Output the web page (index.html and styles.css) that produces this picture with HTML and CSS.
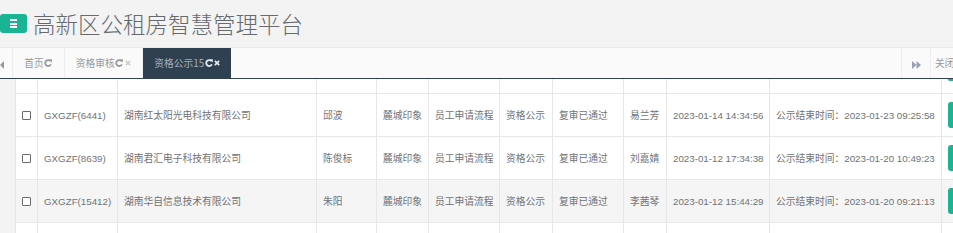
FILE: index.html
```html
<!DOCTYPE html>
<html lang="zh-CN">
<head>
<meta charset="utf-8">
<title>高新区公租房智慧管理平台</title>
<link rel="stylesheet" href="styles.css">
</head>
<body>
<header class="header">
  <a class="menu-btn" href="#" aria-label="菜单"><span></span><span></span><span></span></a>
  <h1 class="title">高新区公租房智慧管理平台</h1>
</header>
<div class="tabbar">
  <div class="roll-left"><svg width="4" height="8" viewBox="0 0 4 8"><polygon points="0,4 4,0 4,8" fill="#9a9a9a"/></svg></div>
  <nav class="page-tabs">
    <a class="tab" href="#">首页<svg class="ico-refresh" viewBox="0 0 8 8"><path d="M6.6 2.2A3 3 0 1 0 6.9 5.4" fill="none" stroke="currentColor" stroke-width="1.8"/><polygon points="4.6,0.2 7.9,0.2 7.9,3.5" fill="currentColor"/></svg></a>
    <a class="tab" href="#">资格审核<svg class="ico-refresh" viewBox="0 0 8 8"><path d="M6.6 2.2A3 3 0 1 0 6.9 5.4" fill="none" stroke="currentColor" stroke-width="1.8"/><polygon points="4.6,0.2 7.9,0.2 7.9,3.5" fill="currentColor"/></svg><svg class="ico-close" viewBox="0 0 7 7"><path d="M1 1L6 6M6 1L1 6" stroke="currentColor" stroke-width="1.9"/></svg></a>
    <a class="tab active" href="#">资格公示15<svg class="ico-refresh" viewBox="0 0 8 8"><path d="M6.6 2.2A3 3 0 1 0 6.9 5.4" fill="none" stroke="currentColor" stroke-width="1.8"/><polygon points="4.6,0.2 7.9,0.2 7.9,3.5" fill="currentColor"/></svg><svg class="ico-close" viewBox="0 0 7 7"><path d="M1 1L6 6M6 1L1 6" stroke="currentColor" stroke-width="1.9"/></svg></a>
  </nav>
  <div class="roll-right"><svg width="9" height="8" viewBox="0 0 9 8"><polygon points="0,0 4.5,4 0,8" fill="#9aa0b4"/><polygon points="4.5,0 9,4 4.5,8" fill="#9aa0b4"/></svg></div>
  <div class="close-tab">关闭</div>
</div>
<main class="content">
  <table class="grid">
    <colgroup>
      <col class="c-chk"><col class="c-code"><col class="c-company"><col class="c-name"><col class="c-park"><col class="c-flow"><col class="c-stage"><col class="c-status"><col class="c-user"><col class="c-time"><col class="c-end"><col class="c-op">
    </colgroup>
    <tbody>
      <tr class="row-cut-top">
        <td></td><td></td><td></td><td></td><td></td><td></td><td></td><td></td><td></td><td></td><td></td><td><div class="btn-tail"></div></td>
      </tr>
      <tr>
        <td class="chk"><input type="checkbox"></td>
        <td>GXGZF(6441)</td>
        <td>湖南红太阳光电科技有限公司</td>
        <td>邱波</td>
        <td>麓城印象</td>
        <td>员工申请流程</td>
        <td>资格公示</td>
        <td>复审已通过</td>
        <td>易兰芳</td>
        <td class="num">2023-01-14 14:34:56</td>
        <td>公示结束时间：<span class="num">2023-01-23 09:25:58</span></td>
        <td><a class="btn-op" href="#" aria-label="操作"></a></td>
      </tr>
      <tr>
        <td class="chk"><input type="checkbox"></td>
        <td>GXGZF(8639)</td>
        <td>湖南君汇电子科技有限公司</td>
        <td>陈俊标</td>
        <td>麓城印象</td>
        <td>员工申请流程</td>
        <td>资格公示</td>
        <td>复审已通过</td>
        <td>刘嘉婧</td>
        <td class="num">2023-01-12 17:34:38</td>
        <td>公示结束时间：<span class="num">2023-01-20 10:49:23</span></td>
        <td><a class="btn-op" href="#" aria-label="操作"></a></td>
      </tr>
      <tr class="hover">
        <td class="chk"><input type="checkbox"></td>
        <td>GXGZF(15412)</td>
        <td>湖南华自信息技术有限公司</td>
        <td>朱阳</td>
        <td>麓城印象</td>
        <td>员工申请流程</td>
        <td>资格公示</td>
        <td>复审已通过</td>
        <td>李茜琴</td>
        <td class="num">2023-01-12 15:44:29</td>
        <td>公示结束时间：<span class="num">2023-01-20 09:21:13</span></td>
        <td><a class="btn-op" href="#" aria-label="操作"></a></td>
      </tr>
      <tr class="row-cut-bottom">
        <td></td><td></td><td></td><td></td><td></td><td></td><td></td><td></td><td></td><td></td><td></td><td></td>
      </tr>
    </tbody>
  </table>
</main>
</body>
</html>
```

FILE: styles.css
```css
html, body {
  margin: 0;
  padding: 0;
}
body {
  width: 953px;
  height: 233px;
  overflow: hidden;
  background: #f3f3f4;
  font-family: "Liberation Sans", "Noto Sans CJK SC", sans-serif;
  color: #676a6c;
}
a { text-decoration: none; }

.header {
  height: 47px;
  display: flex;
  align-items: center;
  background: #f3f3f4;
}
.menu-btn {
  width: 27px;
  height: 19px;
  box-sizing: border-box;
  background: #1ab394;
  border-radius: 3px;
  display: flex;
  flex-direction: column;
  justify-content: center;
  align-items: center;
  gap: 1.5px;
}
.menu-btn span {
  display: block;
  width: 7px;
  height: 2px;
  background: #fff;
}
.title {
  margin: 0 0 0 6px;
  font-size: 22.5px;
  font-weight: 300;
  line-height: 47px;
  color: #676a6c;
  font-family: "Noto Sans CJK SC", sans-serif;
}

.tabbar {
  width: 953px;
  height: 30px;
  display: flex;
  background: #fafafa;
  border-top: 1px solid #e9e9e9;
  border-bottom: 1px solid #2f4050;
  font-size: 9.75px;
  line-height: 30px;
  color: #999;
}
.roll-left {
  width: 13px;
  flex: none;
  border-right: 1px solid #eee;
  display: flex;
  align-items: center;
  padding-top: 3px;
  box-sizing: border-box;
}
.page-tabs {
  flex: 1;
  display: flex;
}
.tab {
  display: flex;
  align-items: center;
  padding: 0 11.25px;
  border-right: 1px solid #eee;
  color: #999;
  font-family: "Noto Sans CJK SC", sans-serif;
}
.tab .ico-refresh {
  width: 8px;
  height: 8px;
  margin-left: 0.5px;
  color: #9a9a9a;
}
.tab .ico-close {
  width: 6px;
  height: 6px;
  margin-left: 1.5px;
  color: #cfcfcf;
}
.tab.active {
  background: #2f4050;
  color: #a7b1c2;
  border-right: none;
}
.tab.active .ico-refresh,
.tab.active .ico-close {
  color: #e8ecf2;
}
.roll-right {
  width: 30px;
  flex: none;
  border-left: 1px solid #eee;
  border-right: 1px solid #eee;
  display: flex;
  justify-content: center;
  align-items: center;
  padding-top: 3px;
  box-sizing: border-box;
}
.close-tab {
  width: 22px;
  flex: none;
  padding-left: 4px;
  box-sizing: border-box;
  white-space: nowrap;
  overflow: hidden;
  font-family: "Noto Sans CJK SC", sans-serif;
  color: #999;
}

.content {
  padding-left: 15px;
}
.grid {
  table-layout: fixed;
  border-collapse: collapse;
  width: 985px;
  background: #fff;
  font-size: 9.75px;
}
.c-chk { width: 22px; }
.c-code { width: 80px; }
.c-company { width: 199px; }
.c-name { width: 60px; }
.c-park { width: 52px; }
.c-flow { width: 71px; }
.c-stage { width: 53px; }
.c-status { width: 71px; }
.c-user { width: 43px; }
.c-time { width: 103px; }
.c-end { width: 172px; }
.c-op { width: 59px; }

.grid td {
  border: 1px solid #e7e7e7;
  height: 42px;
  padding: 0 0 0 6px;
  white-space: nowrap;
  overflow: hidden;
  vertical-align: middle;
  font-family: "Noto Sans CJK SC", sans-serif;
  color: #6f7275;
}
.grid .row-cut-top td {
  height: 14px;
  border-top: none;
  vertical-align: top;
}
.grid .row-cut-bottom td {
  height: 20px;
}
.grid tr.hover td { background: #f5f5f5; }
.grid td.chk {
  padding: 0;
  text-align: center;
}
.grid td:nth-child(2),
.grid .num {
  font-family: "Liberation Sans", sans-serif;
}
.chk input {
  -webkit-appearance: none;
  appearance: none;
  width: 9px;
  height: 9px;
  border: 1px solid #6b6b6b;
  border-radius: 1px;
  background: #fff;
  display: block;
  margin: 0 auto;
}
.btn-op {
  display: block;
  width: 60px;
  height: 26px;
  border-radius: 3px;
  background: #1ab394;
}
.btn-tail {
  width: 60px;
  height: 2px;
  background: #1ab394;
  border-radius: 0 0 3px 3px;
}
```
